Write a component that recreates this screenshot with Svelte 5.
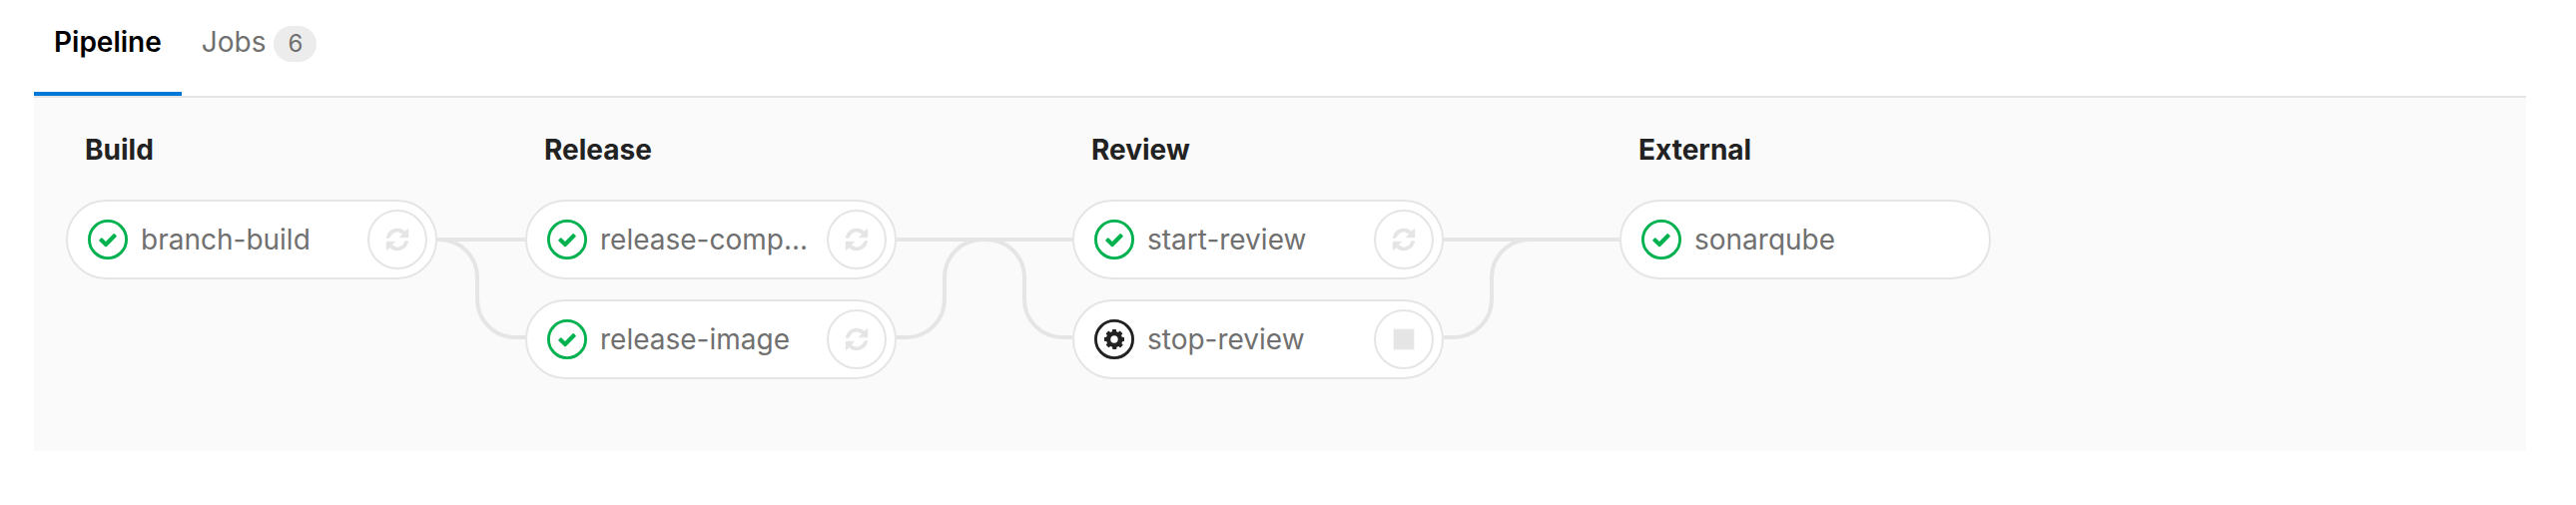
<script>
  const tabs = [
    { name: 'Pipeline', active: true },
    { name: 'Jobs', count: 6, active: false }
  ];

  // `link` names the connector drawn between a stage and the next one.
  const stages = [
    {
      name: 'Build',
      link: 'split',
      jobs: [{ name: 'branch-build', status: 'success', action: 'retry' }]
    },
    {
      name: 'Release',
      link: 'cross',
      jobs: [
        { name: 'release-comp...', status: 'success', action: 'retry' },
        { name: 'release-image', status: 'success', action: 'retry' }
      ]
    },
    {
      name: 'Review',
      link: 'merge',
      jobs: [
        { name: 'start-review', status: 'success', action: 'retry' },
        { name: 'stop-review', status: 'manual', action: 'stop' }
      ]
    },
    {
      name: 'External',
      link: null,
      jobs: [{ name: 'sonarqube', status: 'success', action: null }]
    }
  ];

  const mergePath = 'M0 138H10A38 38 0 0 0 48 100V78A38 38 0 0 1 86 40';
  const connectors = {
    split: { width: 88, d: 'M0 40H88M2 40A38 38 0 0 1 40 78V100A38 38 0 0 0 78 138H88' },
    cross: { width: 176, d: `M0 40H176${mergePath}M90 40A38 38 0 0 1 128 78V100A38 38 0 0 0 166 138H176` },
    merge: { width: 176, d: `M0 40H176${mergePath}` }
  };
</script>

<main>
  <nav>
    {#each tabs as tab}
      <a class="tab" class:active={tab.active} href="#{tab.name.toLowerCase()}">
        {tab.name}
        {#if tab.count}<span class="badge">{tab.count}</span>{/if}
      </a>
    {/each}
  </nav>

  <section class="graph">
    {#each stages as stage}
      <div class="stage">
        <h2>{stage.name}</h2>
        <ul>
          {#each stage.jobs as job}
            <li class="job">
              <a class="job-link" href="#{job.name}">
                <svg class="status {job.status}" viewBox="0 0 14 14" aria-hidden="true">
                  <circle cx="7" cy="7" r="6.5" fill="none" stroke="currentColor" />
                  {#if job.status === 'success'}
                    <path d="M6.278 7.697L5.045 6.464a.296.296 0 0 0-.42-.002l-.613.614a.298.298 0 0 0 .002.42l1.91 1.909a.5.5 0 0 0 .703.005l.265-.265L9.997 6.04a.291.291 0 0 0-.009-.408l-.614-.614a.29.29 0 0 0-.408-.009L6.278 7.697z" />
                  {:else}
                    <path fill-rule="evenodd" d="M10.5 7.63V6.37l-.787-.13c-.044-.175-.132-.349-.263-.61l.481-.652-.918-.913-.657.478a2.346 2.346 0 0 0-.612-.26L7.656 3.5H6.388l-.132.783c-.219.043-.394.13-.612.26l-.657-.478-.918.913.437.652c-.131.218-.175.392-.262.61l-.744.086v1.261l.787.13c.044.218.132.392.263.61l-.438.651.92.913.655-.434c.175.086.394.173.613.26l.131.783h1.313l.131-.783c.219-.043.394-.13.613-.26l.656.478.918-.913-.48-.652c.13-.218.218-.435.262-.61l.656-.13zM7 8.283a1.285 1.285 0 0 1-1.313-1.304c0-.739.57-1.304 1.313-1.304.744 0 1.313.565 1.313 1.304 0 .74-.57 1.304-1.313 1.304z" />
                  {/if}
                </svg>
                <span class="name">{job.name}</span>
              </a>
              {#if job.action}
                <button type="button" aria-label={job.action}>
                  {#if job.action === 'retry'}
                    <svg viewBox="0 0 24 24" aria-hidden="true">
                      <path d="M.8 10.4C1.6 4.9 6.2.8 11.9.8c3 0 5.700 1.100 7.700 3L22.600 1.100q.6-.4.6.3V9.600q0 .6-.6.600H14.700q-.9 0-.3-.7L17 6.500A7.400 7.400 0 0 0 4.900 9.800q-.3.900-1 .9H1.300q-.6 0-.5-.3z" />
                      <path transform="rotate(180 12 12)" d="M.8 10.4C1.6 4.9 6.2.8 11.9.8c3 0 5.700 1.100 7.700 3L22.600 1.100q.6-.4.6.3V9.600q0 .6-.6.600H14.700q-.9 0-.3-.7L17 6.500A7.400 7.400 0 0 0 4.900 9.800q-.3.900-1 .9H1.300q-.6 0-.5-.3z" />
                    </svg>
                  {:else}
                    <svg viewBox="0 0 24 24" aria-hidden="true">
                      <rect x="1.700" y="1.700" width="20.600" height="20.600" />
                    </svg>
                  {/if}
                </button>
              {/if}
            </li>
          {/each}
        </ul>
      </div>
      {#if stage.link}
        <svg
          class="connector"
          width={connectors[stage.link].width}
          height="180"
          viewBox="0 0 {connectors[stage.link].width} 180"
          aria-hidden="true"
        >
          <path d={connectors[stage.link].d} />
        </svg>
      {/if}
    {/each}
  </section>
</main>

<style>
  :global(body) {
    margin: 0;
    background: #fff;
  }

  main {
    padding: 0 50px 0 34px;
    font-family: Inter, 'Liberation Sans', sans-serif;
    font-size: 28px;
    line-height: 36px;
    color: #707070;
  }

  nav {
    display: flex;
    border-bottom: 2px solid #e5e5e5;
  }

  .tab {
    display: flex;
    gap: 8px;
    padding: 24px 20px 30px;
    border-bottom: 4px solid transparent;
    color: #707070;
    text-decoration: none;
  }

  .tab.active {
    border-color: #0078d7;
    color: #000;
    font-weight: 600;
  }

  .badge {
    margin-top: 2px;
    padding: 0 14px;
    border-radius: 18px;
    background: #ececec;
    font-size: 24px;
  }

  .graph {
    display: flex;
    align-items: flex-start;
    padding: 34px 32px 72px;
    background: #fafafa;
    overflow-x: auto;
  }

  .stage {
    flex: 0 0 372px;
  }

  h2 {
    margin: 0 0 32px;
    padding: 0 19px;
    color: #222;
    font-size: 28px;
    font-weight: 700;
    line-height: 36px;
  }

  ul {
    display: flex;
    flex-direction: column;
    gap: 20px;
    margin: 0;
    padding: 0;
    list-style: none;
  }

  .job {
    display: flex;
    align-items: center;
    box-sizing: border-box;
    height: 80px;
    padding: 0 8px 0 20px;
    border: 2px solid #e5e5e5;
    border-radius: 40px;
    background: #fff;
  }

  .job-link {
    display: flex;
    flex: 1;
    align-items: center;
    gap: 13px;
    min-width: 0;
    color: #707070;
    text-decoration: none;
  }

  .status {
    flex: none;
    width: 40px;
    height: 40px;
    fill: currentColor;
  }

  .success {
    color: #00b14f;
  }

  .manual {
    color: #222;
  }

  .name {
    white-space: nowrap;
  }

  button {
    display: grid;
    flex: none;
    place-items: center;
    box-sizing: border-box;
    width: 60px;
    height: 60px;
    padding: 0;
    border: 2px solid #e5e5e5;
    border-radius: 50%;
    background: #fff;
    cursor: pointer;
  }

  button svg {
    width: 24px;
    height: 24px;
    fill: #e5e5e5;
  }

  .connector {
    flex: none;
    margin-top: 68px;
    fill: none;
    stroke: #e5e5e5;
    stroke-width: 4px;
  }
</style>
